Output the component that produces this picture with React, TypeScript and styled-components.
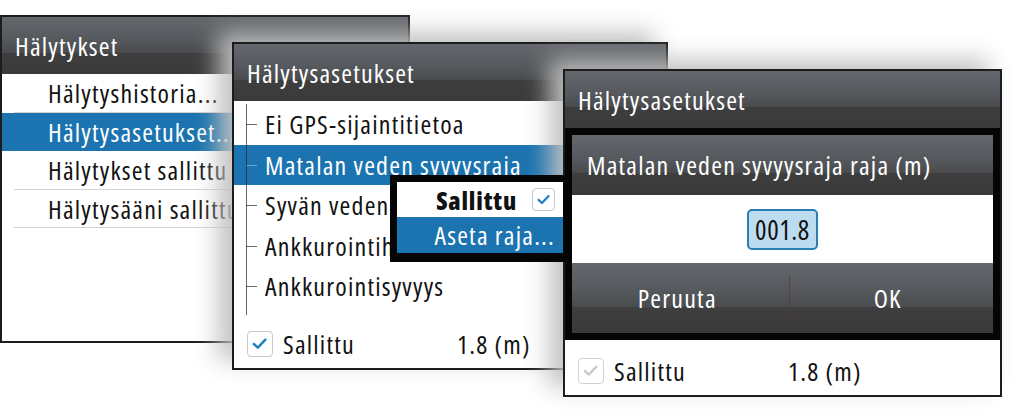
import React from "react";
import styled, { createGlobalStyle, css } from "styled-components";

const Global = createGlobalStyle`
  html, body { margin: 0; padding: 0; background: #ffffff; }
  body {
    font-family: "Open Sans", "DejaVu Sans", sans-serif;
    font-stretch: 75%;
    font-weight: 500;
    letter-spacing: 1.2px;
    -webkit-font-smoothing: antialiased;
  }
`;

const BLUE = "#1b74b0";
const FS = "26px";
const barGradient = css`
  background: linear-gradient(
    to bottom,
    #64686d 0%,
    #55585c 40%,
    #4a4c4f 62%,
    #3e3e3e 64%,
    #3a3a3a 100%
  );
`;

const Desktop = styled.div`
  position: relative;
  width: 1023px;
  height: 420px;
  overflow: hidden;
  background: #ffffff;
`;

const Window = styled.section<{ $x: number; $y: number; $w: number; $raised?: boolean }>`
  position: absolute;
  left: ${(p) => p.$x}px;
  top: ${(p) => p.$y}px;
  width: ${(p) => p.$w}px;
  height: 328px;
  box-sizing: border-box;
  border: 2px solid #1c1c1c;
  background: #ffffff;
  display: flex;
  flex-direction: column;
  ${(p) =>
    p.$raised &&
    css`
      box-shadow: -14px -10px 22px rgba(192, 192, 192, 0.95);
    `}
`;

const TitleBar = styled.header`
  ${barGradient};
  height: 57px;
  flex: 0 0 57px;
  display: flex;
  align-items: center;
  padding-left: 13px;
  color: #ffffff;
  font-size: ${FS};
  white-space: nowrap;
`;

const MenuList = styled.ul`
  list-style: none;
  margin: 0;
  padding: 0;
`;

const MenuItem = styled.li<{ $active?: boolean }>`
  position: relative;
  height: 38.5px;
  display: flex;
  align-items: center;
  padding-left: 46px;
  font-size: ${FS};
  white-space: nowrap;
  color: ${(p) => (p.$active ? "#ffffff" : "#121212")};
  background: ${(p) => (p.$active ? BLUE : "transparent")};
  &::after {
    content: "";
    position: absolute;
    left: 12px;
    right: 0;
    bottom: 0;
    height: 1px;
    background: ${(p) => (p.$active ? "transparent" : "#dccfcf")};
  }
`;

const Tree = styled.ul`
  position: relative;
  list-style: none;
  margin: 0;
  padding: 3px 0 8px;
  &::before {
    content: "";
    position: absolute;
    z-index: 1;
    left: 12px;
    top: 3px;
    bottom: 0;
    width: 1px;
    background: rgba(40, 40, 40, 0.7);
  }
`;

const TreeItem = styled.li<{ $active?: boolean }>`
  position: relative;
  height: 40.5px;
  display: flex;
  align-items: center;
  padding-left: 31px;
  font-size: ${FS};
  white-space: nowrap;
  color: ${(p) => (p.$active ? "#ffffff" : "#121212")};
  background: ${(p) => (p.$active ? BLUE : "transparent")};
  &::after {
    content: "";
    position: absolute;
    left: 12px;
    top: 50%;
    width: 11px;
    height: 1px;
    background: ${(p) => (p.$active ? "rgba(255,255,255,0.35)" : "rgba(40,40,40,0.7)")};
  }
`;

const StatusRow = styled.div`
  margin-top: auto;
  height: 48px;
  flex: 0 0 48px;
  display: flex;
  align-items: center;
  padding-left: 13px;
  font-size: ${FS};
  color: #121212;
`;

const StatusLabel = styled.span`
  margin-left: 10px;
  width: 174px;
`;

const Box = styled.span<{ $size: number; $dim?: boolean }>`
  box-sizing: border-box;
  width: ${(p) => p.$size}px;
  height: ${(p) => p.$size}px;
  flex: 0 0 ${(p) => p.$size}px;
  border: 1.5px solid ${(p) => (p.$dim ? "#d2d2d2" : "#c4c8cc")};
  border-radius: 4px;
  background: #ffffff;
  display: flex;
  align-items: center;
  justify-content: center;
  svg {
    width: 72%;
    height: 72%;
  }
`;

const Popup = styled.div`
  position: absolute;
  z-index: 3;
  left: 156px;
  top: 131px;
  width: 180px;
  box-sizing: border-box;
  border: 7px solid #050505;
  border-bottom-width: 9px;
  background: #ffffff;
`;

const PopupRow = styled.div<{ $active?: boolean }>`
  height: ${(p) => (p.$active ? 36 : 35)}px;
  display: flex;
  align-items: center;
  justify-content: flex-end;
  gap: 15px;
  padding-right: 8px;
  font-size: ${FS};
  white-space: nowrap;
  color: ${(p) => (p.$active ? "#ffffff" : "#111111")};
  background: ${(p) => (p.$active ? BLUE : "#ffffff")};
`;

const Strong = styled.span`
  font-weight: 800;
  font-size: 25px;
  letter-spacing: 0.8px;
`;

const Dialog = styled.div`
  border: 7px solid #050505;
  display: flex;
  flex-direction: column;
`;

const DialogHeader = styled.div`
  ${barGradient};
  height: 60px;
  display: flex;
  align-items: center;
  padding-left: 15px;
  color: #ffffff;
  font-size: ${FS};
  white-space: nowrap;
`;

const DialogBody = styled.div`
  height: 68px;
  background: #ffffff;
  display: flex;
  align-items: center;
  justify-content: center;
`;

const NumberField = styled.div`
  box-sizing: border-box;
  width: 71px;
  height: 41px;
  border: 2px solid #2a7db6;
  border-radius: 5px;
  background: #bddcf0;
  display: flex;
  align-items: center;
  justify-content: center;
  font-size: 27px;
  letter-spacing: 0.6px;
  color: #101010;
`;

const ButtonBar = styled.div`
  ${barGradient};
  height: 70px;
  display: flex;
`;

const DialogButton = styled.div<{ $divided?: boolean }>`
  position: relative;
  flex: 1;
  display: flex;
  align-items: center;
  justify-content: center;
  color: #ffffff;
  font-size: ${FS};
  ${(p) =>
    p.$divided &&
    css`
      &::before {
        content: "";
        position: absolute;
        left: 6px;
        top: 12px;
        bottom: 12px;
        width: 1px;
        background: rgba(110, 40, 40, 0.55);
      }
    `}
`;

const Tick = ({ color }: { color: string }) => (
  <svg viewBox="0 0 24 24" fill="none">
    <polyline
      points="4,12.5 9.5,17.5 20,6.5"
      stroke={color}
      strokeWidth="3.4"
      strokeLinecap="round"
      strokeLinejoin="round"
    />
  </svg>
);

export default function App() {
  return (
    <>
      <Global />
      <Desktop>
        <Window $x={0} $y={15} $w={410}>
          <TitleBar>Hälytykset</TitleBar>
          <MenuList>
            <MenuItem>Hälytyshistoria...</MenuItem>
            <MenuItem $active>Hälytysasetukset...</MenuItem>
            <MenuItem>Hälytykset sallittu</MenuItem>
            <MenuItem>Hälytysääni sallittu</MenuItem>
          </MenuList>
        </Window>

        <Window $x={232} $y={42} $w={436} $raised>
          <TitleBar>Hälytysasetukset</TitleBar>
          <Tree>
            <TreeItem>Ei GPS-sijaintitietoa</TreeItem>
            <TreeItem $active>Matalan veden syvyysraja</TreeItem>
            <TreeItem>Syvän veden syvyysraja</TreeItem>
            <TreeItem>Ankkurointihälytys</TreeItem>
            <TreeItem>Ankkurointisyvyys</TreeItem>
          </Tree>
          <StatusRow>
            <Box $size={26}>
              <Tick color="#1f7fc0" />
            </Box>
            <StatusLabel>Sallittu</StatusLabel>
            <span>1.8 (m)</span>
          </StatusRow>
          <Popup>
            <PopupRow>
              <Strong>Sallittu</Strong>
              <Box $size={23}>
                <Tick color="#1f7fc0" />
              </Box>
            </PopupRow>
            <PopupRow $active>Aseta raja...</PopupRow>
          </Popup>
        </Window>

        <Window $x={563} $y={69} $w={439} $raised>
          <TitleBar>Hälytysasetukset</TitleBar>
          <Dialog>
            <DialogHeader>Matalan veden syvyysraja raja (m)</DialogHeader>
            <DialogBody>
              <NumberField>001.8</NumberField>
            </DialogBody>
            <ButtonBar>
              <DialogButton>Peruuta</DialogButton>
              <DialogButton $divided>OK</DialogButton>
            </ButtonBar>
          </Dialog>
          <StatusRow>
            <Box $size={26} $dim>
              <Tick color="#c9c9c9" />
            </Box>
            <StatusLabel>Sallittu</StatusLabel>
            <span>1.8 (m)</span>
          </StatusRow>
        </Window>
      </Desktop>
    </>
  );
}
